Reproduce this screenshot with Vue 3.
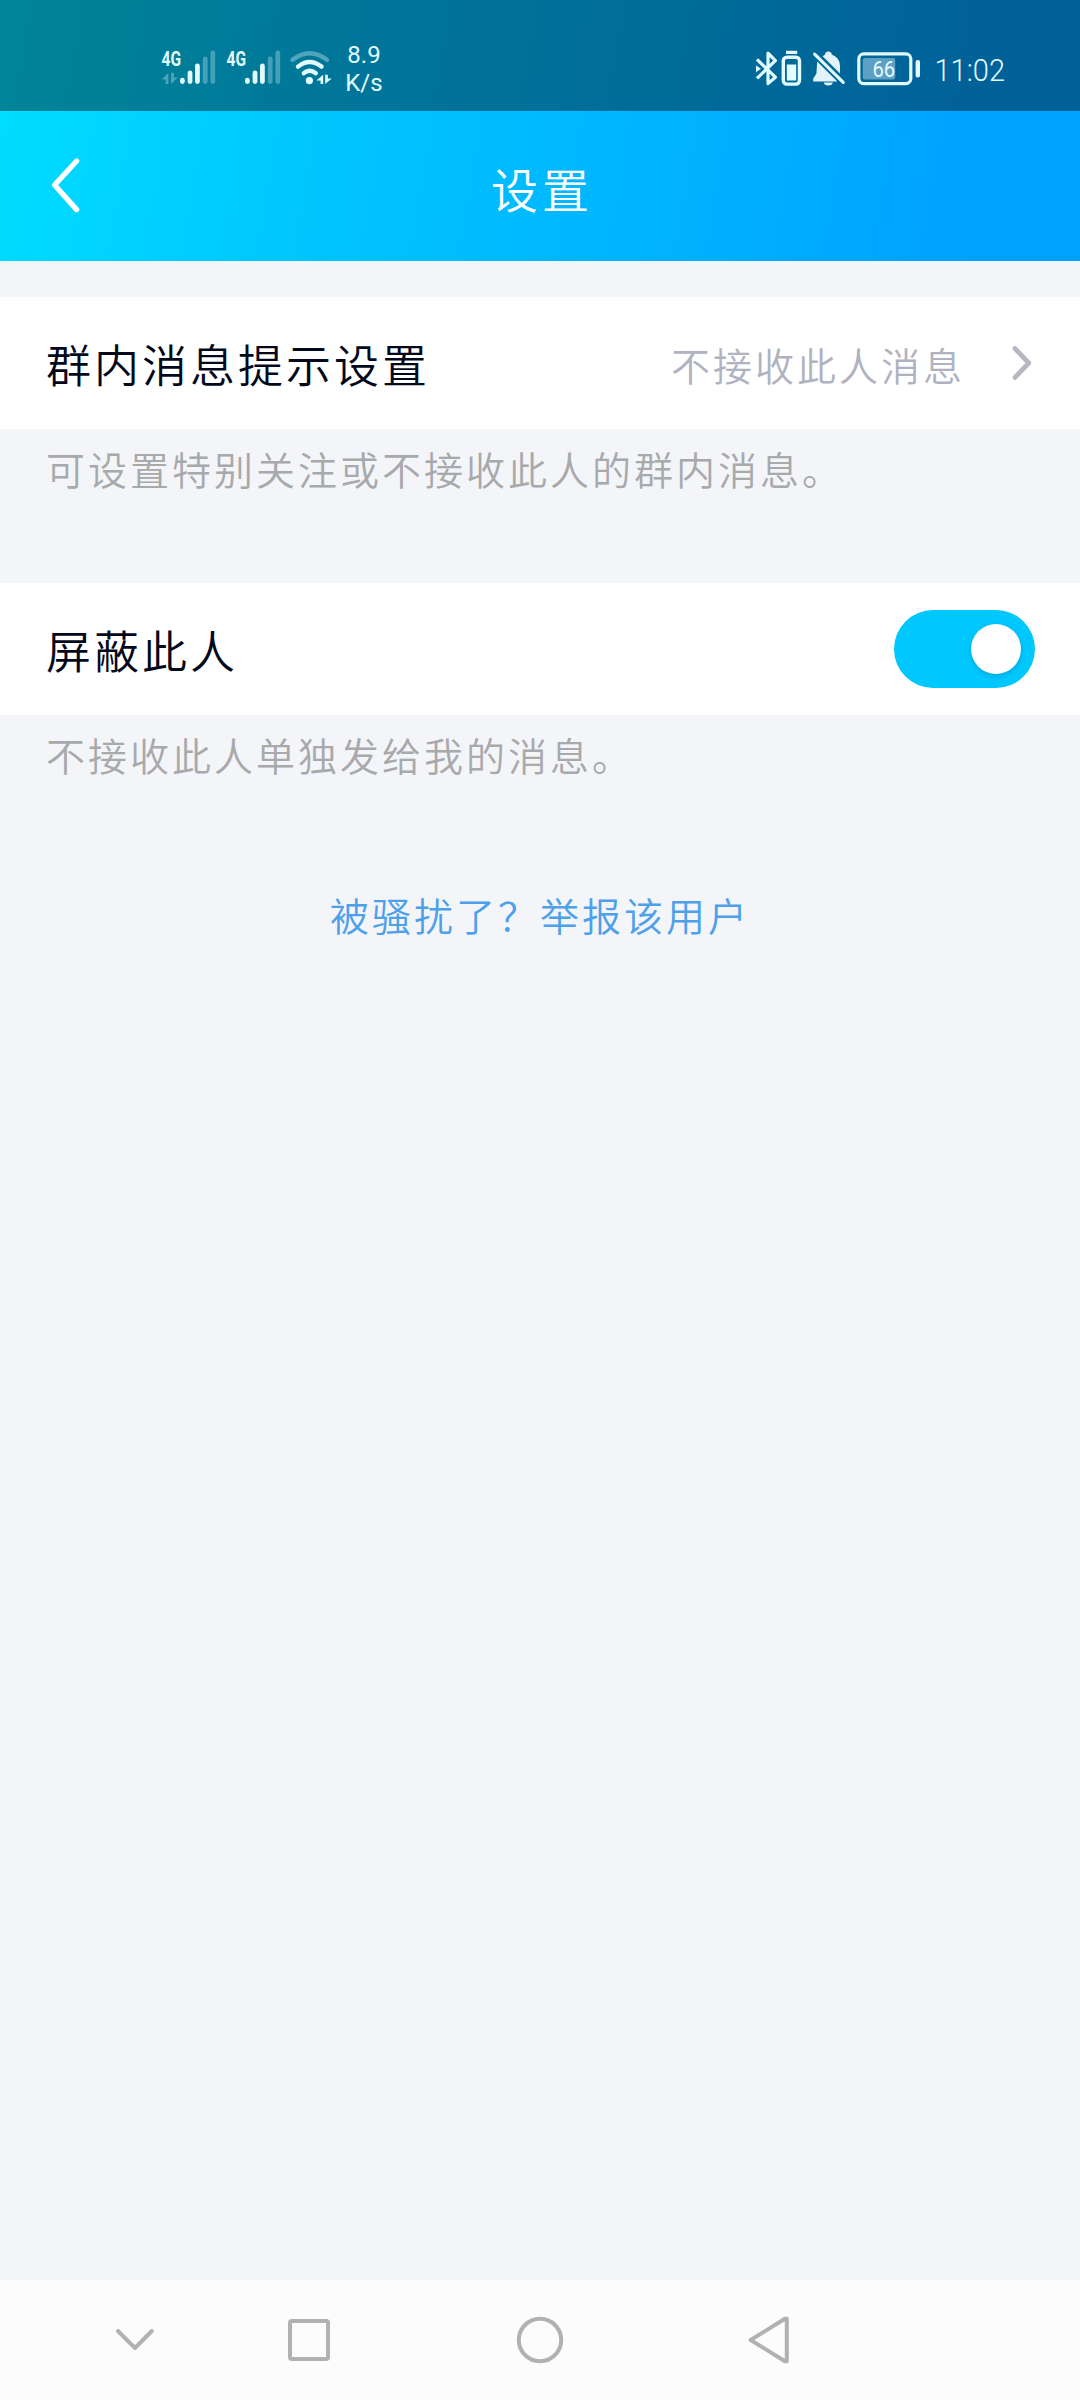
<script setup>
import { ref } from 'vue'

const blocked = ref(true)
const signals = [
  { x: 0, arrows: true },
  { x: 65, arrows: false }
]
const bars = [
  { x: 182.4, y: 80.2, on: true },
  { x: 190, y: 73, on: true },
  { x: 197.4, y: 66, on: true },
  { x: 205.2, y: 59, on: false },
  { x: 212.8, y: 53, on: false }
]
</script>

<template>
  <div class="screen">
    <header class="top">
      <div class="status">
        <svg class="radio" viewBox="160 0 174 111" width="174" height="111">
          <g v-for="s in signals" :key="s.x" :transform="`translate(${s.x} 0)`">
            <text x="161.5" y="65.8" font-size="20" font-weight="700" textLength="19.5" lengthAdjust="spacingAndGlyphs" fill="#e2fbff">4G</text>
            <path v-if="s.arrows" d="M168.4 72.8v11.2h-2.8v-4.6h-4zM171 72.8h2.8v4.6h3.8l-6.6 6.6z" fill="#fff" opacity=".3" />
            <line v-for="b in bars" :key="b.x" :x1="b.x" :x2="b.x" :y1="b.y" y2="81.6" stroke="#e2fbff" stroke-width="4.8" stroke-linecap="round" :opacity="b.on ? 1 : 0.3" />
          </g>
          <g fill="none" stroke="#e2fbff" stroke-width="4.4" stroke-linecap="round">
            <path d="M292.5 59.8Q309.5 46.5 327 59.8" opacity=".35" />
            <path d="M298 66.6Q309.5 57.4 321.5 66.6" />
            <path d="M303.8 73.2Q309.5 68.2 315.8 73.2" />
          </g>
          <circle cx="309.4" cy="80.6" r="3.6" fill="#e2fbff" />
          <path d="M323.2 74.8v9.2h-2.6v-3.4h-4.2zM325.2 74.8h2.6v3.6h4l-6.6 5.6z" fill="#e2fbff" />
        </svg>
        <div class="speed"><span>8.9</span><span>K/s</span></div>
        <svg class="system" viewBox="754 0 256 111" width="256" height="111">
          <path d="M757 59.4L775.4 77.2L768 83.6V53.2L775.4 60.6L757 78.4" fill="none" stroke="#e2fbff" stroke-width="3.2" stroke-linejoin="round" />
          <path d="M756 65.4l5 3.4l-5 3.4z" fill="#e2fbff" />
          <rect x="783.3" y="57.3" width="16.2" height="26.8" rx="3.5" fill="none" stroke="#e2fbff" stroke-width="3.4" />
          <path d="M786 50.8h11.2v3.2H786zM786.8 64.6h9.4v16h-9.4z" fill="#e2fbff" />
          <path d="M817.2 61.6L837.4 81.6H813.2v-3.2l3.2-4.6zM822.6 56.2Q824.4 54.8 825 54.4Q825.4 51.6 828.3 51.6Q831.2 51.6 831.8 54.4Q840 57.6 840 66V73.4zM823.8 82.6h9Q832.3 85.6 828.3 85.6T823.8 82.6z" fill="#e2f3fb" />
          <path d="M814.6 54.2L843.2 82.4" stroke="#e2fbff" stroke-width="3.2" stroke-linecap="round" />
          <rect x="858.8" y="53.8" width="52" height="29.8" rx="5" fill="none" stroke="#e2fbff" stroke-width="3.2" />
          <rect x="862.8" y="58" width="32.4" height="21.4" rx="2" fill="#dff3ff" opacity=".42" />
          <text x="872.4" y="76.7" font-size="22.5" textLength="22.8" lengthAdjust="spacingAndGlyphs" fill="#e2fbff">66</text>
          <rect x="915.6" y="60" width="4.4" height="17.4" rx="2" fill="#e2fbff" />
          <text class="clock" x="934.5" y="80.6" font-size="31.5" textLength="70.5" lengthAdjust="spacingAndGlyphs" fill="#e2fbff">11:02</text>
        </svg>
      </div>
      <div class="titlebar">
        <svg class="back" viewBox="0 0 40 60" width="40" height="60">
          <path d="M28.6 6L6.6 30L28.6 54.6" fill="none" stroke="#fff" stroke-width="5.4" stroke-linecap="round" stroke-linejoin="round" />
        </svg>
        <h1>设置</h1>
      </div>
    </header>

    <main>
      <div class="row">
        <span class="label">群内消息提示设置</span>
        <span class="value">不接收此人消息</span>
        <svg class="more" viewBox="0 0 22 36" width="22" height="36">
          <path d="M4 3.6L17.8 18L4 32.4" fill="none" stroke="#b6b7c1" stroke-width="4.8" stroke-linecap="round" stroke-linejoin="round" />
        </svg>
      </div>
      <p class="hint">可设置特别关注或不接收此人的群内消息。</p>
      <div class="row">
        <span class="label">屏蔽此人</span>
        <button class="switch" :class="{ on: blocked }" type="button" @click="blocked = !blocked"><i></i></button>
      </div>
      <p class="hint">不接收此人单独发给我的消息。</p>
      <a class="report">被骚扰了？举报该用户</a>
    </main>

    <nav>
      <svg viewBox="0 2280 1080 120" width="1080" height="120" fill="none" stroke="#b1b1b1" stroke-width="4" stroke-linecap="round" stroke-linejoin="round">
        <path d="M118 2331L135 2348L151.8 2331" />
        <rect x="290" y="2321" width="38" height="38" rx="2" />
        <circle cx="540" cy="2340" r="21.2" />
        <path d="M750.6 2340L785 2318.8H786.8V2361.2H785z" />
      </svg>
    </nav>
  </div>
</template>

<style>
body { background: #f4f5f9; }
</style>

<style scoped>
.screen {
  width: 1080px;
  height: 2400px;
  display: flex;
  flex-direction: column;
  background: #f4f5f9;
  font-family: "Noto Sans CJK SC", sans-serif;
  font-weight: 350;
  overflow: hidden;
}
.top {
  height: 261px;
  background: linear-gradient(100deg, #00deff 0%, #00c6ff 30%, #00a2ff 90%);
}
.status {
  height: 111px;
  display: flex;
  background: rgba(0, 0, 0, 0.4);
  font-family: Roboto, sans-serif;
  font-weight: 400;
  color: #e2fbff;
}
.radio { margin-left: 160px; }
.speed {
  width: 60px;
  padding-top: 41px;
  display: flex;
  flex-direction: column;
  align-items: center;
  font-size: 24px;
  line-height: 28px;
}
.system { margin-left: 360px; overflow: visible; }
.clock { font-weight: 300; }
.titlebar {
  height: 150px;
  display: grid;
  grid-template-columns: 160px 1fr 160px;
  align-items: center;
}
.back { margin: 0 0 2px 48px; }
h1 {
  margin: 3px 0 0;
  text-align: center;
  font-size: 47px;
  font-weight: 350;
  letter-spacing: 4px;
  text-indent: 4px;
  line-height: 60px;
  color: #fff;
}
main { flex: 1; display: flex; flex-direction: column; }
.row {
  height: 132px;
  margin-top: 36px;
  padding: 0 45px 0 46px;
  display: flex;
  align-items: center;
  background: #fff;
  flex: none;
}
.label {
  margin-right: auto;
  padding-top: 1px;
  font-size: 45px;
  letter-spacing: 3px;
  color: #03081a;
}
.value {
  padding-top: 1px;
  margin-right: 46px;
  font-size: 39px;
  letter-spacing: 3px;
  color: #b0b3bf;
}
.more { margin-right: 2px; }
.hint {
  height: 82px;
  margin: 0 0 36px;
  padding-left: 46px;
  font-size: 39px;
  line-height: 79px;
  letter-spacing: 3px;
  color: #a8a9ab;
}
.switch {
  width: 141px;
  height: 78px;
  padding: 0 14px;
  border: 0;
  border-radius: 39px;
  display: flex;
  align-items: center;
  background: #d8dae0;
}
.switch.on { background: #00c8ff; justify-content: flex-end; }
.switch i {
  width: 50px;
  height: 50px;
  border-radius: 50%;
  background: #fff;
  box-shadow: 0 2px 5px rgba(0, 60, 110, 0.25);
}
.report {
  align-self: center;
  margin-top: 51px;
  font-size: 39px;
  line-height: 60px;
  letter-spacing: 3px;
  color: #4da0ea;
}
nav { height: 120px; background: #fcfcfc; }
nav svg { display: block; }
</style>
